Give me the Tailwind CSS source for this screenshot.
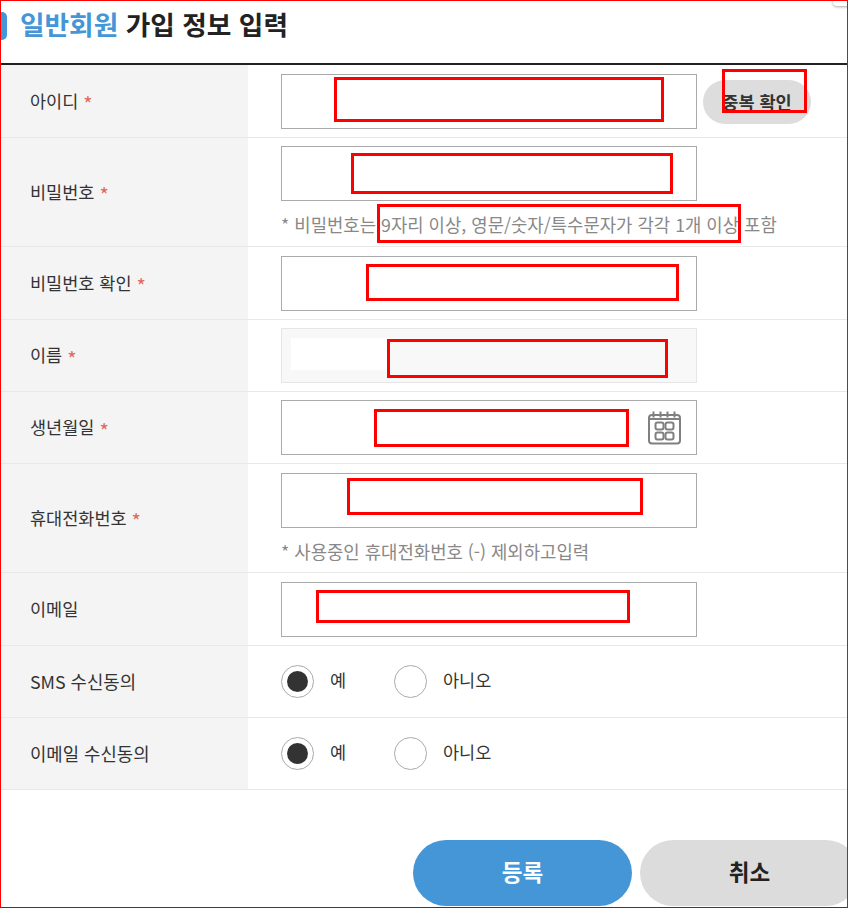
<!DOCTYPE html>
<html lang="ko">
<head>
<meta charset="utf-8">
<script src="https://cdn.jsdelivr.net/npm/@tailwindcss/browser@4"></script>
</head>
<body class="bg-white">
<div class="relative w-[848px] h-[908px] overflow-hidden bg-white text-[#333] font-['Noto_Sans_CJK_KR','Noto_Sans',sans-serif]">
  <header class="relative h-[65px] border-b-[2px] border-[#222] flex items-center pl-[20px] pb-[16px]">
    <span class="absolute left-0 top-[12px] w-[7px] h-[28px] rounded-r-[5px] bg-[#4596d7]"></span>
    <h1 class="text-[26.700px] leading-[30px] font-bold text-[#222]"><span class="text-[#4596d7]">일반회원</span> 가입 정보 입력</h1>
  </header>

  <div class="grid grid-cols-[248px_1fr] h-[73px] border-b border-[#e8e8e8]">
    <div class="bg-[#f4f4f4] flex items-center pl-[30px] text-[17.500px]">아이디<span class="text-[#e0695c] ml-[5px] text-[20px] translate-y-[3px]">*</span></div>
    <div class="pl-[33px] pt-[9px] flex items-start">
      <div class="w-[416px] h-[55px] border border-[#aaa] bg-white"></div>
      <button class="ml-[6px] mt-[6px] w-[108px] h-[44px] rounded-full bg-[#dddddd] text-[17.500px] font-bold text-[#333]">중복 확인</button>
    </div>
  </div>

  <div class="grid grid-cols-[248px_1fr] h-[109px] border-b border-[#e8e8e8]">
    <div class="bg-[#f4f4f4] flex items-center pl-[30px] text-[17.500px]">비밀번호<span class="text-[#e0695c] ml-[5px] text-[20px] translate-y-[3px]">*</span></div>
    <div class="pl-[33px] pt-[8px]">
      <div class="w-[416px] h-[55px] border border-[#aaa] bg-white"></div>
      <p class="mt-[11px] text-[17.800px] leading-[24px] text-[#888] whitespace-nowrap">* 비밀번호는 9자리 이상, 영문/숫자/특수문자가 각각 1개 이상 포함</p>
    </div>
  </div>

  <div class="grid grid-cols-[248px_1fr] h-[73px] border-b border-[#e8e8e8]">
    <div class="bg-[#f4f4f4] flex items-center pl-[30px] text-[17.500px]">비밀번호 확인<span class="text-[#e0695c] ml-[5px] text-[20px] translate-y-[3px]">*</span></div>
    <div class="pl-[33px] pt-[9px]"><div class="w-[416px] h-[55px] border border-[#aaa] bg-white"></div></div>
  </div>

  <div class="grid grid-cols-[248px_1fr] h-[72px] border-b border-[#e8e8e8]">
    <div class="bg-[#f4f4f4] flex items-center pl-[30px] text-[17.500px]">이름<span class="text-[#e0695c] ml-[5px] text-[20px] translate-y-[3px]">*</span></div>
    <div class="pl-[33px] pt-[8px]">
      <div class="w-[416px] h-[55px] border border-[#e6e6e6] bg-[#f8f8f8] pl-[9px] pt-[9px]"><div class="w-[100px] h-[32px] bg-white"></div></div>
    </div>
  </div>

  <div class="grid grid-cols-[248px_1fr] h-[72px] border-b border-[#e8e8e8]">
    <div class="bg-[#f4f4f4] flex items-center pl-[30px] text-[17.500px]">생년월일<span class="text-[#e0695c] ml-[5px] text-[20px] translate-y-[3px]">*</span></div>
    <div class="pl-[33px] pt-[8px]">
      <div class="w-[416px] h-[55px] border border-[#aaa] bg-white flex items-center justify-end pr-[15px]">
        <svg width="34" height="34" viewBox="0 0 34 34" fill="none" stroke="#808080" stroke-width="2">
          <rect x="2" y="4" width="31" height="28.500" rx="3"/>
          <path d="M2 8H33M6.500 0.500V6.500M13.500 0.500V6.500M20.500 0.500V6.500M27.500 0.500V6.500"/>
          <rect x="8.500" y="11.500" width="8" height="7" rx="2"/>
          <rect x="18.500" y="11.500" width="8" height="7" rx="2"/>
          <rect x="8.500" y="21.500" width="8" height="7" rx="2"/>
          <rect x="18.500" y="21.500" width="8" height="7" rx="2"/>
        </svg>
      </div>
    </div>
  </div>

  <div class="grid grid-cols-[248px_1fr] h-[109px] border-b border-[#e8e8e8]">
    <div class="bg-[#f4f4f4] flex items-center pl-[30px] text-[17.500px]">휴대전화번호<span class="text-[#e0695c] ml-[5px] text-[20px] translate-y-[3px]">*</span></div>
    <div class="pl-[33px] pt-[9px]">
      <div class="w-[416px] h-[55px] border border-[#aaa] bg-white"></div>
      <p class="mt-[11px] text-[17.800px] leading-[24px] text-[#888] whitespace-nowrap">* 사용중인 휴대전화번호 (-) 제외하고입력</p>
    </div>
  </div>

  <div class="grid grid-cols-[248px_1fr] h-[73px] border-b border-[#e8e8e8]">
    <div class="bg-[#f4f4f4] flex items-center pl-[30px] text-[17.500px]">이메일</div>
    <div class="pl-[33px] pt-[9px]"><div class="w-[416px] h-[55px] border border-[#aaa] bg-white"></div></div>
  </div>

  <div class="grid grid-cols-[248px_1fr] h-[72px] border-b border-[#e8e8e8]">
    <div class="bg-[#f4f4f4] flex items-center pl-[30px] text-[17.800px]">SMS 수신동의</div>
    <div class="pl-[33px] flex items-center">
      <span class="w-[33px] h-[33px] rounded-full border border-[#aaa] bg-white flex items-center justify-center"><span class="w-[21px] h-[21px] rounded-full bg-[#333]"></span></span>
      <span class="ml-[16px] w-[64px] text-[17.500px] -mt-[3px]">예</span>
      <span class="w-[33px] h-[33px] rounded-full border border-[#aaa] bg-white"></span>
      <span class="ml-[16px] text-[17.500px] -mt-[3px]">아니오</span>
    </div>
  </div>

  <div class="grid grid-cols-[248px_1fr] h-[72px] border-b border-[#e8e8e8]">
    <div class="bg-[#f4f4f4] flex items-center pl-[30px] text-[17.800px]">이메일 수신동의</div>
    <div class="pl-[33px] flex items-center">
      <span class="w-[33px] h-[33px] rounded-full border border-[#aaa] bg-white flex items-center justify-center"><span class="w-[21px] h-[21px] rounded-full bg-[#333]"></span></span>
      <span class="ml-[16px] w-[64px] text-[17.500px] -mt-[3px]">예</span>
      <span class="w-[33px] h-[33px] rounded-full border border-[#aaa] bg-white"></span>
      <span class="ml-[16px] text-[17.500px] -mt-[3px]">아니오</span>
    </div>
  </div>

  <div class="flex gap-[8px] pl-[413px] pt-[50px]">
    <button class="w-[219px] h-[66px] shrink-0 rounded-full bg-[#4596d7] text-white text-[22.500px] font-bold pb-[3px]">등록</button>
    <button class="w-[219px] h-[66px] shrink-0 rounded-full bg-[#dcdcdc] text-[#222] text-[22.500px] font-bold pb-[3px]">취소</button>
  </div>

  <!-- annotations lying over the screenshot -->
  <div class="absolute left-[833px] -top-[6px] w-[20px] h-[12px] rounded-[4px] bg-white shadow-[0_1px_3px_rgba(0,0,0,0.35)]"></div>
  <div class="absolute left-[334px] top-[77px] w-[330px] h-[45px] border-[3px] border-[#ff0000]"></div>
  <div class="absolute left-[722px] top-[69px] w-[85px] h-[44px] border-[3px] border-[#ff0000]"></div>
  <div class="absolute left-[351px] top-[153px] w-[322px] h-[41px] border-[3px] border-[#ff0000]"></div>
  <div class="absolute left-[377px] top-[204px] w-[364px] h-[39px] border-[3px] border-[#ff0000]"></div>
  <div class="absolute left-[366px] top-[264px] w-[313px] h-[37px] border-[3px] border-[#ff0000]"></div>
  <div class="absolute left-[387px] top-[339px] w-[281px] h-[39px] border-[3px] border-[#ff0000]"></div>
  <div class="absolute left-[374px] top-[409px] w-[255px] h-[38px] border-[3px] border-[#ff0000]"></div>
  <div class="absolute left-[347px] top-[478px] w-[296px] h-[37px] border-[3px] border-[#ff0000]"></div>
  <div class="absolute left-[316px] top-[590px] w-[314px] h-[33px] border-[3px] border-[#ff0000]"></div>
  <div class="absolute inset-0 border border-[#ff0000] border-b-[#cc0000] pointer-events-none"></div>
</div>
</body>
</html>
